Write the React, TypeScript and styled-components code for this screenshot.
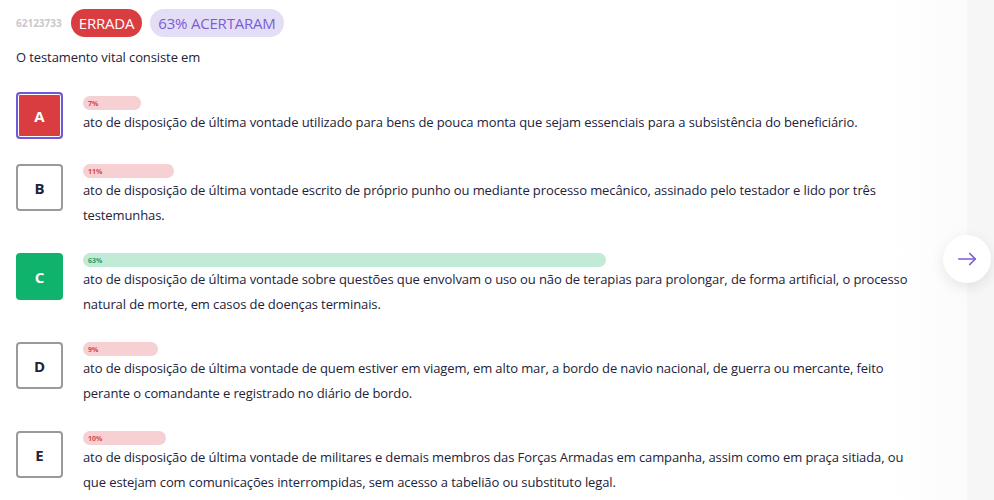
import React from 'react';
import styled, { createGlobalStyle } from 'styled-components';

interface Alternative {
  letter: string;
  percent: number;
  text: string;
  status?: 'wrong' | 'right';
}

const ALTERNATIVES: Alternative[] = [
  {
    letter: 'A',
    percent: 7,
    status: 'wrong',
    text: 'ato de disposição de última vontade utilizado para bens de pouca monta que sejam essenciais para a subsistência do beneficiário.',
  },
  {
    letter: 'B',
    percent: 11,
    text: 'ato de disposição de última vontade escrito de próprio punho ou mediante processo mecânico, assinado pelo testador e lido por três testemunhas.',
  },
  {
    letter: 'C',
    percent: 63,
    status: 'right',
    text: 'ato de disposição de última vontade sobre questões que envolvam o uso ou não de terapias para prolongar, de forma artificial, o processo natural de morte, em casos de doenças terminais.',
  },
  {
    letter: 'D',
    percent: 9,
    text: 'ato de disposição de última vontade de quem estiver em viagem, em alto mar, a bordo de navio nacional, de guerra ou mercante, feito perante o comandante e registrado no diário de bordo.',
  },
  {
    letter: 'E',
    percent: 10,
    text: 'ato de disposição de última vontade de militares e demais membros das Forças Armadas em campanha, assim como em praça sitiada, ou que estejam com comunicações interrompidas, sem acesso a tabelião ou substituto legal.',
  },
];

const GlobalStyle = createGlobalStyle`
  html, body {
    margin: 0;
    padding: 0;
    background: #ffffff;
    font-family: 'Open Sans', 'Liberation Sans', sans-serif;
    color: #22223a;
  }
`;

const Page = styled.div`
  position: relative;
  display: grid;
  grid-template-columns: 1fr 27px;
  width: 994px;
  height: 500px;
  overflow: hidden;
`;

const Main = styled.main`
  padding: 9px 0 0 16px;
  background: linear-gradient(90deg, #ffffff 92%, #fbfbfb 100%);
`;

const Sidebar = styled.aside`
  background: #f6f6f6;
`;

const Header = styled.div`
  display: flex;
  align-items: center;
  gap: 8px;
  height: 28px;
`;

const QuestionId = styled.span`
  font-size: 10px;
  font-weight: 700;
  color: #c9c9c9;
  margin-right: 1px;
`;

const Badge = styled.span<{ $variant: 'wrong' | 'info' }>`
  display: inline-flex;
  align-items: center;
  height: 28px;
  padding: 0 8px;
  border-radius: 14px;
  font-size: 15px;
  letter-spacing: -0.2px;
  background: ${({ $variant }) => ($variant === 'wrong' ? '#d93d40' : '#e4ddf6')};
  color: ${({ $variant }) => ($variant === 'wrong' ? '#ffffff' : '#7b5dd3')};
`;

const Statement = styled.p`
  margin: 11px 0 0;
  font-size: 13px;
  line-height: 18px;
  letter-spacing: -0.1px;
`;

const List = styled.div`
  display: flex;
  flex-direction: column;
  gap: 25px;
  margin-top: 26px;
  padding-right: 40px;
`;

const Row = styled.div`
  display: flex;
  align-items: flex-start;
  gap: 20px;
`;

const LetterBox = styled.div<{ $status?: 'wrong' | 'right' }>`
  flex: 0 0 auto;
  box-sizing: border-box;
  width: 47px;
  height: 47px;
  display: flex;
  align-items: center;
  justify-content: center;
  border-radius: 4px;
  font-size: 15px;
  font-weight: 700;
  border: 2px solid
    ${({ $status }) =>
      $status === 'wrong' ? '#7257d6' : $status === 'right' ? '#10b36c' : '#9a9a9a'};
  background: ${({ $status }) =>
    $status === 'wrong' ? '#d93d40' : $status === 'right' ? '#10b36c' : '#ffffff'};
  color: ${({ $status }) => ($status ? '#ffffff' : '#22223a')};
  box-shadow: ${({ $status }) => ($status === 'wrong' ? 'inset 0 0 0 1px #ffffff' : 'none')};
`;

const Content = styled.div`
  flex: 1;
  min-height: 47px;
  display: flex;
  flex-direction: column;
  justify-content: center;
`;

const Track = styled.div`
  width: 830px;
  height: 14px;
`;

const Bar = styled.div<{ $right?: boolean }>`
  height: 14px;
  border-radius: 7px;
  box-sizing: border-box;
  padding-left: 5px;
  display: flex;
  align-items: center;
  font-size: 7px;
  font-weight: 700;
  background: ${({ $right }) => ($right ? '#c2ebd7' : '#f6d0d2')};
  color: ${({ $right }) => ($right ? '#2f9a66' : '#d5474b')};
`;

const Text = styled.p`
  margin: 0;
  font-size: 13px;
  line-height: 25px;
  letter-spacing: -0.1px;
  max-width: 830px;
`;

const NextButton = styled.button`
  position: absolute;
  left: 943px;
  top: 235px;
  width: 48px;
  height: 48px;
  border-radius: 50%;
  border: none;
  background: #ffffff;
  box-shadow: 0 4px 14px rgba(0, 0, 0, 0.09);
  display: flex;
  align-items: center;
  justify-content: center;
  padding: 0;
`;

export default function App() {
  return (
    <>
      <GlobalStyle />
      <Page>
        <Main>
          <Header>
            <QuestionId>62123733</QuestionId>
            <Badge $variant="wrong">ERRADA</Badge>
            <Badge $variant="info">63% ACERTARAM</Badge>
          </Header>
          <Statement>O testamento vital consiste em</Statement>
          <List>
            {ALTERNATIVES.map((alt) => (
              <Row key={alt.letter}>
                <LetterBox $status={alt.status}>{alt.letter}</LetterBox>
                <Content>
                  <Track>
                    <Bar $right={alt.status === 'right'} style={{ width: `${alt.percent}%` }}>
                      {alt.percent}%
                    </Bar>
                  </Track>
                  <Text>{alt.text}</Text>
                </Content>
              </Row>
            ))}
          </List>
        </Main>
        <Sidebar />
        <NextButton aria-label="Próxima">
          <svg width="22" height="22" viewBox="0 0 24 24" fill="none" stroke="#7b5dd3" strokeWidth="1.8" strokeLinecap="round" strokeLinejoin="round">
            <path d="M3 12h18" />
            <path d="M15 6l6 6-6 6" />
          </svg>
        </NextButton>
      </Page>
    </>
  );
}
